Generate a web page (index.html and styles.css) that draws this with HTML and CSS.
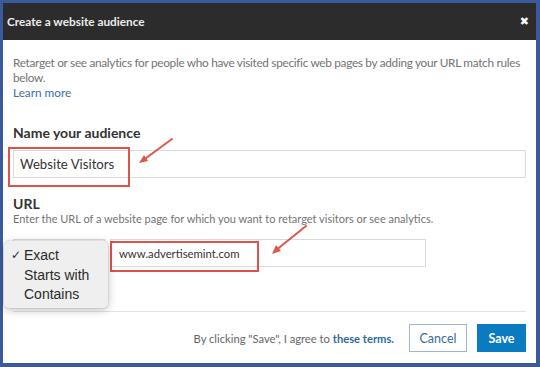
FILE: index.html
```html
<!DOCTYPE html>
<html>
<head>
  <title>Create a website audience</title>
  <link rel="stylesheet" href="styles.css">
</head>
<body>
  <div class="dialog">
    <!-- Header -->
    <div class="dialog-header">
      <h2 class="dialog-title">Create a website audience</h2>
      <span class="close-btn">&#10006;</span>
    </div>

    <div class="dialog-body">
      <p class="intro">Retarget or see analytics for people who have visited specific web pages by adding your URL match rules below.<br><a href="#" class="link">Learn more</a></p>

      <label class="field-label" for="audience">Name your audience</label>
      <div class="text-input name-input">Website Visitors</div>

      <label class="field-label url-label">URL</label>
      <p class="helper">Enter the URL of a website page for which you want to retarget visitors or see analytics.</p>

      <div class="url-row">
        <div class="select-box"></div>
        <div class="text-input url-input">www.advertisemint.com</div>
      </div>

      <div class="dialog-footer">
        <p class="terms">By clicking "Save", I agree to <a href="#" class="terms-link">these terms.</a></p>
        <button class="btn btn-secondary">Cancel</button>
        <button class="btn btn-primary">Save</button>
      </div>
    </div>

    <!-- Annotations -->
    <div class="highlight highlight-name"></div>
    <svg class="arrow arrow-name" viewBox="0 0 50 40" width="50" height="40">
      <line x1="39" y1="6" x2="9" y2="28" stroke="#de574c" stroke-width="2" stroke-linecap="round"/>
      <polygon points="6,30 11,22 15,28" fill="#de574c"/>
    </svg>

    <div class="highlight highlight-url"></div>
    <svg class="arrow arrow-url" viewBox="0 0 50 40" width="50" height="40">
      <line x1="41" y1="5" x2="10" y2="30" stroke="#de574c" stroke-width="2" stroke-linecap="round"/>
      <polygon points="7,33 11,24 16,30" fill="#de574c"/>
    </svg>

    <!-- Match type menu -->
    <ul class="match-menu">
      <li><span class="check">&#10003;</span>Exact</li>
      <li>Starts with</li>
      <li>Contains</li>
    </ul>
  </div>
</body>
</html>
```

FILE: styles.css
```css
/* Base */
body {
  margin: 0;
  width: 540px;
  height: 367px;
  padding: 3px 4px 4px 3px;
  box-sizing: border-box;
  background: #3b5a9d;
  font-family: Lato, 'Open Sans', sans-serif;
  color: #333333;
  overflow: hidden;
}

.dialog {
  position: relative;
  background: #ffffff;
  height: 360px;
}

/* Header */
.dialog-header {
  height: 37px;
  display: flex;
  align-items: center;
  justify-content: space-between;
  padding: 0 7px 0 4px;
  background: #2c2c2c;
}

.dialog-title {
  margin: 0;
  font-size: 11.8px;
  font-weight: 700;
  color: #ececec;
}

.close-btn {
  color: #ffffff;
  font-size: 11px;
  font-family: 'DejaVu Sans', sans-serif;
  font-weight: 700;
}

/* Body */
.dialog-body {
  padding: 15px 10px 0 10px;
}

.intro {
  margin: 0;
  font-size: 11.8px;
  letter-spacing: -0.3px;
  line-height: 15px;
  color: #737373;
}

.link {
  color: #3c6fa8;
  text-decoration: none;
  letter-spacing: 0;
}

.field-label {
  display: block;
  margin-top: 24px;
  font-size: 14px;
  line-height: 18px;
  font-weight: 700;
  color: #333333;
}

.url-label {
  margin-top: 18px;
  line-height: 16px;
}

.helper {
  margin: 0;
  font-size: 11px;
  line-height: 14px;
  color: #737373;
}

.text-input {
  height: 28px;
  box-sizing: border-box;
  border: 1px solid #dadada;
  display: flex;
  align-items: center;
  padding-left: 6px;
  color: #333333;
}

.name-input {
  margin-top: 8px;
  font-size: 13.2px;
}

.url-row {
  display: flex;
  gap: 5px;
  margin-top: 13px;
}

.select-box {
  width: 92px;
  height: 28px;
  box-sizing: border-box;
  border: 1px solid #dadada;
}

.url-input {
  width: 316px;
  font-size: 11.3px;
  padding-left: 8px;
}

/* Footer */
.dialog-footer {
  margin-top: 44px;
  border-top: 1px solid #e3e3e3;
  padding-top: 12px;
  display: flex;
  align-items: center;
  justify-content: flex-end;
}

.terms {
  margin: 0 15px 0 0;
  font-size: 11.2px;
  color: #666666;
}

.terms-link {
  color: #2f6aa3;
  font-weight: 700;
  text-decoration: none;
}

.btn {
  height: 28px;
  box-sizing: border-box;
  font-family: Lato, 'Open Sans', sans-serif;
  font-size: 12.5px;
  cursor: pointer;
}

.btn-secondary {
  width: 58px;
  margin-right: 10px;
  background: #ffffff;
  border: 1px solid #9fb6cf;
  color: #3a6a9c;
}

.btn-primary {
  width: 49px;
  background: #0a7bc1;
  border: none;
  color: #ffffff;
  font-weight: 700;
}

/* Annotations */
.highlight {
  position: absolute;
  box-sizing: border-box;
  border: 2px solid #dd5249;
}

.highlight-name {
  left: 5px;
  top: 144px;
  width: 122px;
  height: 40px;
}

.highlight-url {
  left: 107px;
  top: 238px;
  width: 149px;
  height: 31px;
}

.arrow {
  position: absolute;
}

.arrow-name {
  left: 130px;
  top: 130px;
}

.arrow-url {
  left: 262px;
  top: 218px;
}

/* Native-looking match type menu */
.match-menu {
  position: absolute;
  left: 1px;
  top: 238px;
  width: 104px;
  height: 67px;
  box-sizing: border-box;
  margin: 0;
  padding: 5px 0 0 20px;
  list-style: none;
  background: #efefef;
  border-radius: 5px;
  box-shadow: 0 2px 8px rgba(0, 0, 0, 0.25), 0 0 0 1px rgba(0, 0, 0, 0.06);
  font-family: 'Liberation Sans', Arial, sans-serif;
  font-size: 14px;
  line-height: 19.5px;
  color: #2a2a2a;
}

.match-menu li {
  position: relative;
}

.check {
  position: absolute;
  left: -13px;
  font-size: 12px;
  font-weight: 700;
  font-family: 'DejaVu Sans', sans-serif;
}
```
